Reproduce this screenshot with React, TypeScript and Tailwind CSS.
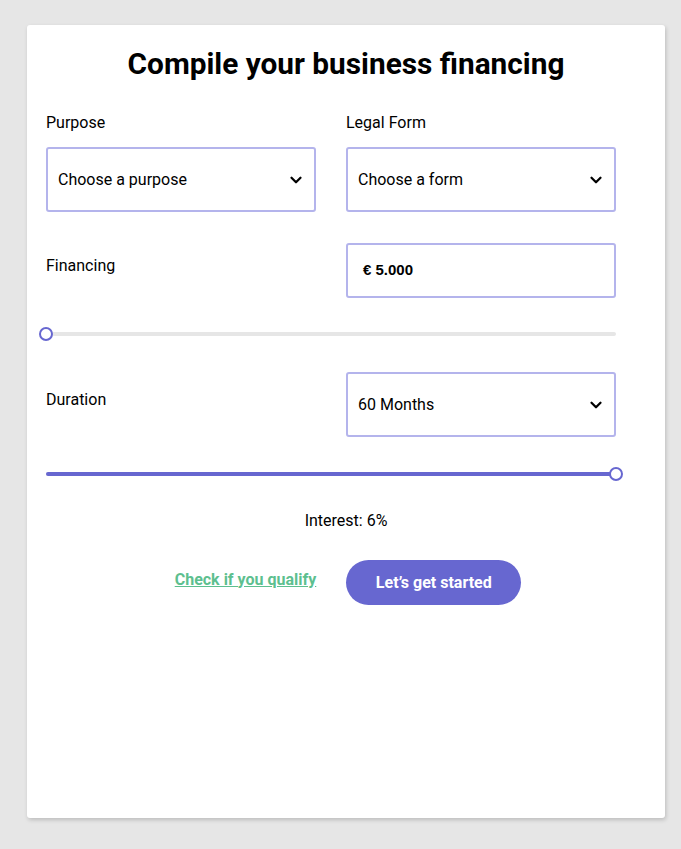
import { ChevronDown } from 'lucide-react';

const font = "font-['Roboto',sans-serif]";

function SelectBox({ value }: { value: string }) {
  return (
    <div className="flex h-[65px] items-center justify-between rounded-[3px] border-2 border-[#b4b4ec] bg-white pl-[10px] pr-[9px]">
      <span className="pt-[1px] text-base text-black">{value}</span>
      <ChevronDown className="h-[18px] w-[18px] text-black" strokeWidth={3} />
    </div>
  );
}

function Slider({ percent }: { percent: number }) {
  return (
    <div className="relative h-[14px] w-full">
      <div className="absolute left-0 right-0 top-[5px] h-1 rounded-full bg-[#e6e6e6]" />
      <div
        className="absolute left-0 top-[5px] h-1 rounded-full bg-[#6767d0]"
        style={{ width: `${percent}%` }}
      />
      <div
        className="absolute top-0 h-[14px] w-[14px] -translate-x-1/2 rounded-full border-2 border-[#6767d0] bg-white"
        style={{ left: `${percent}%` }}
      />
    </div>
  );
}

export default function App() {
  return (
    <div className={`min-h-[849px] bg-[#e6e6e6] pl-[27px] pt-[25px] ${font}`}>
      <div className="h-[793px] w-[638px] rounded-[3px] bg-white pl-[19px] pr-[49px] pt-[20px] shadow-[1px_2px_4px_rgba(0,0,0,0.18)]">
        <h1 className="ml-[30px] text-center text-[29.8px] font-bold leading-[38px] text-black">
          Compile your business financing
        </h1>

        <div className="mt-[30px] grid grid-cols-2 gap-x-[30px]">
          <div>
            <label className="block text-base leading-[19px] text-black">Purpose</label>
            <div className="mt-[15px]">
              <SelectBox value="Choose a purpose" />
            </div>
          </div>
          <div>
            <label className="block text-base leading-[19px] text-black">Legal Form</label>
            <div className="mt-[15px]">
              <SelectBox value="Choose a form" />
            </div>
          </div>
        </div>

        <div className="mt-[31px] grid grid-cols-2 items-center gap-x-[30px]">
          <span className="mb-[9px] text-base text-black">Financing</span>
          <div className="flex h-[55px] items-center rounded-[3px] border-2 border-[#b4b4ec] pl-[15px]">
            <span className="font-['Liberation_Sans',sans-serif] text-[15px] font-bold text-black">€ 5.000</span>
          </div>
        </div>

        <div className="mt-[29px]">
          <Slider percent={0} />
        </div>

        <div className="mt-[31px] grid grid-cols-2 items-center gap-x-[30px]">
          <span className="mb-[9px] text-base text-black">Duration</span>
          <SelectBox value="60 Months" />
        </div>

        <div className="mt-[30px]">
          <Slider percent={100} />
        </div>

        <p className="mt-[28px] pl-[30px] text-center text-base text-black">Interest: 6%</p>

        <div className="mt-[27px] flex items-center justify-center gap-[30px] pl-[34px]">
          <a href="#" className="mb-[6px] text-base font-bold text-[#5dbf8f] underline">
            Check if you qualify
          </a>
          <button className="h-[45px] w-[175px] rounded-full bg-[#6767d0] text-base font-bold text-white">
            Let’s get started
          </button>
        </div>
      </div>
    </div>
  );
}
